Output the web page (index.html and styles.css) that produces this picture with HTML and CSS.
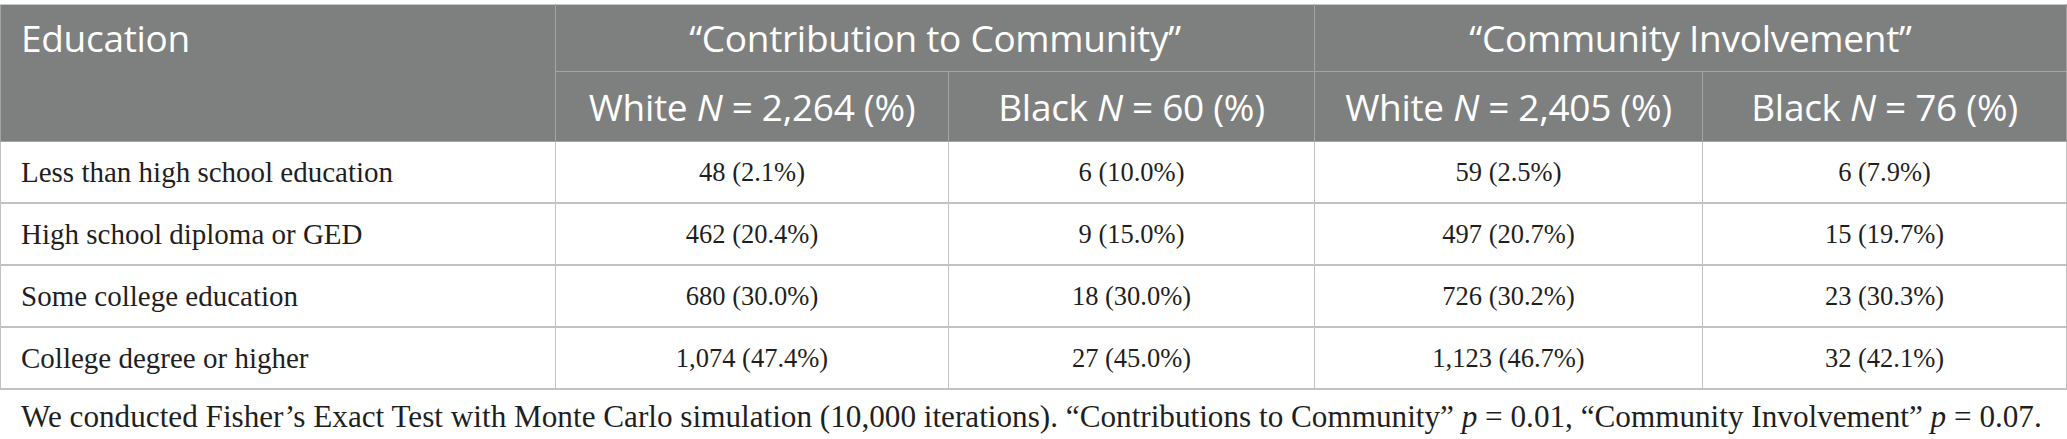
FILE: index.html
```html
<!DOCTYPE html>
<html>
<head>
<meta charset="utf-8">
<link rel="stylesheet" href="styles.css">
</head>
<body>
<div class="wrap">
<table class="tbl">
  <colgroup>
    <col class="c1"><col class="c2"><col class="c3"><col class="c4"><col class="c5">
  </colgroup>
  <thead>
    <tr class="h1">
      <th rowspan="2" class="edu">Education</th>
      <th colspan="2">“Contribution to Community”</th>
      <th colspan="2">“Community Involvement”</th>
    </tr>
    <tr class="h2">
      <th>White <i>N</i> = 2,264 (%)</th>
      <th>Black <i>N</i> = 60 (%)</th>
      <th>White <i>N</i> = 2,405 (%)</th>
      <th>Black <i>N</i> = 76 (%)</th>
    </tr>
  </thead>
  <tbody>
    <tr><td class="lbl">Less than high school education</td><td>48 (2.1%)</td><td>6 (10.0%)</td><td>59 (2.5%)</td><td>6 (7.9%)</td></tr>
    <tr><td class="lbl">High school diploma or GED</td><td>462 (20.4%)</td><td>9 (15.0%)</td><td>497 (20.7%)</td><td>15 (19.7%)</td></tr>
    <tr><td class="lbl">Some college education</td><td>680 (30.0%)</td><td>18 (30.0%)</td><td>726 (30.2%)</td><td>23 (30.3%)</td></tr>
    <tr><td class="lbl">College degree or higher</td><td>1,074 (47.4%)</td><td>27 (45.0%)</td><td>1,123 (46.7%)</td><td>32 (42.1%)</td></tr>
  </tbody>
</table>
<p class="note">We conducted Fisher’s Exact Test with Monte Carlo simulation (10,000 iterations). “Contributions to Community” <i>p</i> = 0.01, “Community Involvement” <i>p</i> = 0.07.</p>
</div>
</body>
</html>
```
FILE: styles.css
```css
html, body {
  margin: 0;
  padding: 0;
  background: #ffffff;
}
.wrap {
  padding-top: 4px;
  width: 2066px;
}
.tbl {
  width: 2066px;
  table-layout: fixed;
  border-collapse: collapse;
}
.c1 { width: 555px; }
.c2 { width: 393px; }
.c3 { width: 366px; }
.c4 { width: 388px; }
.c5 { width: 364px; }
.tbl th {
  background: #7e807f;
  color: #ffffff;
  font-family: "Open Sans", "Noto Sans", sans-serif;
  font-weight: 400;
  font-size: 37px;
  line-height: 44px;
  letter-spacing: -0.3px;
  padding: 0 6px;
  text-align: center;
  border: 1px solid #a3a4a3;
  white-space: nowrap;
}
.tbl tr.h1 th { height: 66px; border-top: 1px solid #c8c8c8; }
.tbl tr.h2 th { height: 69px; }
.tbl th.edu {
  text-align: left;
  vertical-align: top;
  padding: 11px 20px 0;
}
.tbl td {
  font-family: "Liberation Serif", "Times New Roman", serif;
  font-size: 26.5px;
  color: #1f1f1f;
  text-align: center;
  height: 60px;
  padding: 0 10px;
  border-left: 1px solid #c2c2c2;
  border-right: 1px solid #c2c2c2;
  border-bottom: 2px solid #c2c2c2;
}
.tbl td.lbl { text-align: left; padding-left: 20px; font-size: 29px; }
.note {
  margin: 0;
  padding: 9px 0 0 21px;
  font-family: "Liberation Serif", "Times New Roman", serif;
  font-size: 31.2px;
  color: #1f1f1f;
  white-space: nowrap;
}
```
